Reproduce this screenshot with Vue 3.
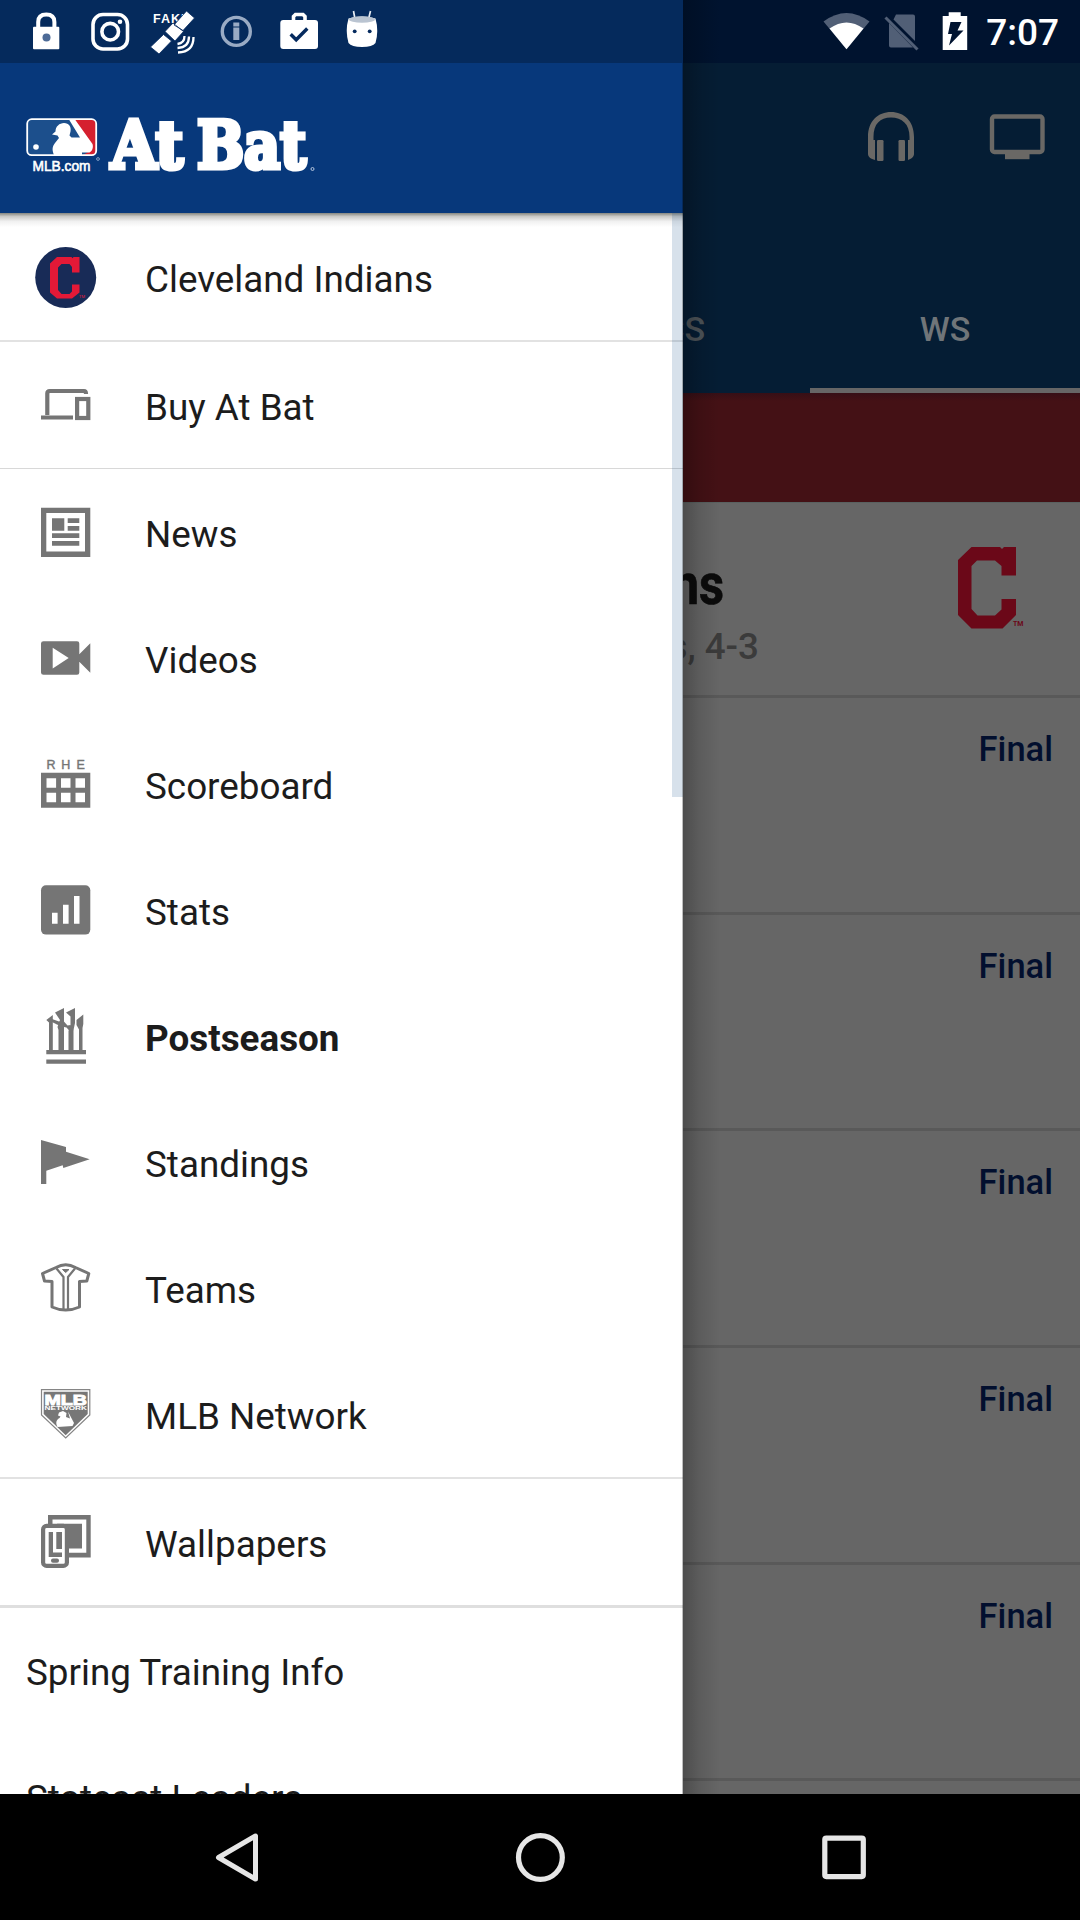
<script setup>
const menu = [
  { label: 'Cleveland Indians', icon: 'team', rule: 'thin' },
  { label: 'Buy At Bat', icon: 'devices', rule: 'hair' },
  { label: 'News', icon: 'news' },
  { label: 'Videos', icon: 'videos' },
  { label: 'Scoreboard', icon: 'scoreboard' },
  { label: 'Stats', icon: 'stats' },
  { label: 'Postseason', icon: 'postseason', active: true },
  { label: 'Standings', icon: 'standings' },
  { label: 'Teams', icon: 'teams' },
  { label: 'MLB Network', icon: 'network', rule: 'thin' },
  { label: 'Wallpapers', icon: 'wallpapers', rule: 'thick' },
  { label: 'Spring Training Info' },
  { label: 'Statcast Leaders' },
]
const games = ['Final', 'Final', 'Final', 'Final', 'Final']
</script>

<template>
  <div class="screen">
    <main class="page">
      <header class="appbar">
        <div class="actions">
          <svg width="48" height="52" viewBox="0 0 48 52" fill="#6a6865">
            <path d="M1 26C1 10 11 1 24 1s23 9 23 25v17c0 3-3 5-6 6V29h1.500v-3C42.500 13 35 6.500 24 6.500S6.500 13 6.500 26v3H8v20c-4-1-7-3-7-6z" />
            <rect x="10" y="29" width="6.500" height="21" rx="1.200" />
            <rect x="31.500" y="29" width="6.500" height="21" rx="1.200" />
          </svg>
          <svg width="56" height="46" viewBox="0 0 56 46">
            <rect x="3" y="2.500" width="50.500" height="35.500" rx="2.500" fill="none" stroke="#6a6865" stroke-width="4.400" />
            <rect x="16" y="38" width="24.500" height="7.200" fill="#6a6865" />
          </svg>
        </div>
        <div class="tabs">
          <div class="tab"></div>
          <div class="tab"></div>
          <div class="tab dim">LCS</div>
          <div class="tab selected">WS</div>
        </div>
      </header>
      <div class="banner"></div>
      <section class="series">
        <div class="series-text">
          <div class="series-title">Indians</div>
          <div class="series-sub">Series, 4-3</div>
        </div>
        <svg class="series-logo" width="72" height="88" viewBox="0 0 72 88">
          <path d="M15.500 1H44l2 2 2-2h12v28.500H45.500V20L39 14.500H21L15.500 20v43l6 6.500H39l6.500-6V53H60v16L46.500 82.500H15.500L2 69V14z" fill="#6b0818" />
          <text x="57" y="80" font-size="7" font-weight="700" fill="#6b0818">TM</text>
        </svg>
      </section>
      <section v-for="(g, i) in games" :key="i" class="game">{{ g }}</section>
    </main>

    <aside class="drawer">
      <div class="brand">
        <svg width="300" height="70" viewBox="0 0 300 70">
          <rect x="1.200" y="6.200" width="69" height="36" rx="4.500" fill="#1c4f8c" />
          <path d="M46 7h20q4 0 4 4v27q0 4-4 4h-9l9-5-1-6z" fill="#d5202f" />
          <path d="M43 6.500h6L66.500 31c1 3 0 7-3 8.500H56v2.500H28c-2-5-2-8 1-12l4-5-1.500-2.500-5.500-1 3.500-3c0-5 4-8.500 8.500-8.500 5 0 7.500 4 6.500 8.500l-1 4 2 2h8.500z" fill="#fff" />
          <circle cx="10" cy="34" r="2.800" fill="#fff" />
          <rect x="1.200" y="6.200" width="69" height="36" rx="4.500" fill="none" stroke="#fff" stroke-width="1.800" />
          <text class="dotcom" x="6.500" y="58.300" textLength="58" lengthAdjust="spacingAndGlyphs">MLB.com</text>
          <circle cx="72" cy="46" r="1.400" fill="none" stroke="#9fb5d4" stroke-width=".8" />
          <text class="atbat" x="85" y="55.300" textLength="72" lengthAdjust="spacingAndGlyphs">At</text>
          <text class="atbat" x="171" y="55.300" textLength="109" lengthAdjust="spacingAndGlyphs">Bat</text>
          <circle cx="286.500" cy="56" r="1.500" fill="none" stroke="#b6c6de" stroke-width="1" />
        </svg>
      </div>
      <nav class="menu">
        <div v-for="m in menu" :key="m.label" class="item" :class="[m.rule, { active: m.active, plain: !m.icon }]">
          <svg v-if="m.icon" class="icon" viewBox="0 0 72 72">
            <template v-if="m.icon === 'team'">
              <circle cx="35.700" cy="36.500" r="30.500" fill="#182b57" />
              <path d="M27 16h14.500l1 1.200 1-1.200h6v15.500H42V26L39.500 23h-8L28 26.500V49l3.500 4h8l2.500-2.500v-7h7.500v8l-7.500 6H27l-7-6v-29z" fill="#e31937" />
              <text x="49" y="57" font-size="4" fill="#e31937">TM</text>
            </template>
            <g v-else-if="m.icon === 'devices'" fill="none" stroke="#757575" stroke-width="4.200">
              <path d="M17.300 46V24.500q0-2.500 2.500-2.500H54q2 0 2 3M11 48.500h32" />
              <rect x="47.100" y="30" width="11.200" height="19" />
            </g>
            <g v-else-if="m.icon === 'news'" fill="#757575">
              <path fill-rule="evenodd" d="M11 11.700h49.300v49.200H11zM16.300 17v38.600H55V17z" />
              <path d="M22 22.300h12.300v12.400H22zM37.700 22.300h11.600V27H37.700zM37.700 30h11.600v4.700H37.700zM22 37.300h27.300V42H22zM22 45h27.300v4.800H22z" />
            </g>
            <g v-else-if="m.icon === 'videos'" fill="#757575">
              <path fill-rule="evenodd" d="M13.500 19.300H47q2.300 0 2.300 2.300v10.700l11-11v29.400l-11-11v10.700q0 2.300-2.300 2.300H13.500q-2.500 0-2.500-2.300V21.600q0-2.300 2.500-2.300zM22.700 25.800v20.600l16-10.300z" />
            </g>
            <g v-else-if="m.icon === 'scoreboard'" fill="#757575">
              <text class="rhe" x="16.600" y="21.300">R</text>
              <text class="rhe" x="31.300" y="21.300">H</text>
              <text class="rhe" x="46.600" y="21.300">E</text>
              <path fill-rule="evenodd" d="M11 24.700h49.300v35H11zM16.500 30.200v9.500h9.600v-9.500zM31 30.200v9.500h9.500v-9.500zM45.500 30.200v9.500H55v-9.500zM16.500 44.800v9.500h9.600v-9.500zM31 44.800v9.500h9.500v-9.500zM45.500 44.800v9.500H55v-9.500z" />
            </g>
            <g v-else-if="m.icon === 'stats'">
              <rect x="11" y="11.300" width="49.300" height="49.300" rx="5" fill="#757575" />
              <path d="M22 38.700h5.600v11H22zM33 30.700h5.600v19H33zM44 22h5.500v27.700H44z" fill="#fff" />
            </g>
            <g v-else-if="m.icon === 'postseason'" fill="#757575">
              <path d="M16.300 50h39.700v4.200H16.300zM16.300 59.600h39.700v4.200H16.300z" />
              <path d="M19 51V22.500l-2.700-2.500 6.500-5v36z" />
              <path d="M22 19l7 2.500 4.500-.5 4 4.500 3-.5 3 5-2.500 2.500-4.500-5-5-1-4.500-2-5-2.500z" />
              <path d="M28.500 51V30l-1-3 2.500-7-5-7.500L34 8v43z" />
              <path d="M38.500 51V31l2-5.500v-9L36 12.500 45 8v15l-1.500 7v21z" />
              <path d="M49 51V29.500L46.500 25V20l6.800-5.500V24L52.500 28v23z" />
            </g>
            <path v-else-if="m.icon === 'standings'" fill="#757575" d="M11 14l25 7v4.700l23.700 7.600L33.300 42l-.6-2.700-16.400 5.400V58H11z" />
            <g v-else-if="m.icon === 'teams'" fill="none" stroke="#757575" stroke-width="3" stroke-linejoin="round">
              <path d="M26 15.500Q35.700 10 45.500 15.500l13.300 6-2 7.500-7.300.5V55q-6.500 3-13.800 3T22 55V29.500l-7.500-.5-2-7.500z" />
              <path d="M26.500 16.500l7 8.500v32.500M45 16.500L38 25v32.500" stroke-width="2.200" />
              <path d="M32.500 17.500h6.500l-3.300 3z" fill="#757575" stroke-width="1" />
            </g>
            <g v-else-if="m.icon === 'network'">
              <path d="M11.500 11.700h48.300V37L35.700 60 11.500 37z" fill="#fff" stroke="#858585" stroke-width="1.200" />
              <path d="M13.700 13.800h44V36L35.700 57.300 13.700 36z" fill="#777" />
              <text class="net-big" x="14.500" y="27" textLength="42.500" lengthAdjust="spacingAndGlyphs">MLB</text>
              <text class="net-small" x="14.500" y="32" textLength="42.500" lengthAdjust="spacingAndGlyphs">NETWORK</text>
              <path d="M27.500 49c-2-4-1.500-7 2-9l1-1.500-2.500-1 1-3 4-1.500 3.500 2-.5 4 4 1.500-2-7 6 11.500-1.500 3z" fill="#fff" />
            </g>
            <g v-else fill="#757575">
              <path fill-rule="evenodd" d="M18 9h42.700v42.400H38v-4.700h18.300V13.400H22.500V19H18z" />
              <path d="M27 17.700h25v24.700H38z" />
              <rect x="13.100" y="19.900" width="23.800" height="40" rx="3.500" fill="#fff" stroke="#757575" stroke-width="4.200" />
              <path d="M18.700 26H23v20.500h9V51H18.700zM26.300 26h5.700v17h-5.700z" />
              <rect x="21" y="52.500" width="8" height="4.200" rx="2" />
            </g>
          </svg>
          <span>{{ m.label }}</span>
        </div>
        <div class="scroll-thumb"></div>
      </nav>
    </aside>

    <div class="status">
      <div class="status-left">
        <svg class="s" viewBox="0 0 63 63">
          <path d="M23.200 28v-6q0-7.500 8.100-7.500t8.100 7.500v6" fill="none" stroke="#fff" stroke-width="4" />
          <rect x="18" y="26.700" width="26.300" height="22.500" rx="1" fill="#fff" />
          <circle cx="31.500" cy="37.500" r="4" fill="#4d6b97" />
        </svg>
        <svg class="s" viewBox="0 0 63 63" fill="none" stroke="#fff">
          <rect x="15" y="14.500" width="34.500" height="34.500" rx="10" stroke-width="3.600" />
          <circle cx="32.200" cy="31.700" r="8.300" stroke-width="3.600" />
          <circle cx="42" cy="21.700" r="2.300" fill="#fff" stroke="none" />
        </svg>
        <svg class="s" viewBox="0 0 63 63">
          <text class="fake" x="12" y="22.600">FAKE</text>
          <path d="M33 25L45.500 11l8 7L42 30.500zM24 31.500l8-8.500 10.500 8.500-8.500 9.500zM9.500 47L22.500 34.500l8 6.500-12.500 13z" fill="#fff" stroke="#052a5e" stroke-width=".8" />
          <g fill="none" stroke="#fff" stroke-width="2.300">
            <path d="M43.500 36q0 7-7 8M48 36.500q0 11-11.500 11.500M52.500 37q0 15-15.500 15.500" />
          </g>
        </svg>
        <svg class="s" viewBox="0 0 63 63" fill="#9aabc4">
          <circle cx="32.300" cy="31.400" r="14" fill="none" stroke="#9aabc4" stroke-width="3.400" />
          <rect x="29.300" y="22.500" width="6" height="4" />
          <rect x="29.300" y="27.500" width="6" height="12.500" />
        </svg>
        <svg class="s" viewBox="0 0 63 63">
          <rect x="13.300" y="20" width="37.700" height="29" rx="3" fill="#fff" />
          <path d="M26.500 21v-4.500l2-2h7.500l2 2V21" fill="none" stroke="#fff" stroke-width="3.600" />
          <path d="M23.700 34.300l5.500 5.500L40.300 28.500" fill="none" stroke="#052a5e" stroke-width="3.400" />
        </svg>
        <svg class="s" viewBox="0 0 63 63">
          <path d="M23.500 11l1.300 7M40.500 11l-1.700 7" stroke="#e8edf4" stroke-width="1.700" />
          <path d="M18.500 18.500q13.500-4 27 0 3.500 12.500 0 24.500-3 4-13.500 4t-13.500-4q-3.500-12.500 0-24.500z" fill="#fff" />
          <ellipse cx="32" cy="19.500" rx="13" ry="3.300" fill="#bac4d1" />
          <circle cx="24.700" cy="31.300" r="1.900" fill="#052a5e" />
          <circle cx="39.700" cy="31.300" r="1.900" fill="#052a5e" />
        </svg>
      </div>
      <div class="status-right">
        <svg width="48" height="63" viewBox="0 0 48 63">
          <path d="M1.500 21.500Q24.500 4.500 47.500 21.500L24.500 49.300z" fill="#515f76" />
          <path d="M7.500 28.500Q24.500 16.500 41.500 28.500L24.500 49.300z" fill="#fff" />
        </svg>
        <svg width="36" height="63" viewBox="0 0 36 63">
          <path d="M12 14.500h17q2 0 2 2V41L9.500 19.500zM5 23l24 24.500H7q-2 0-2-2z" fill="#515f76" />
          <path d="M1.500 17.500l32 32" stroke="#515f76" stroke-width="3" />
        </svg>
        <svg width="26" height="63" viewBox="0 0 26 63">
          <path d="M.7 16h6v-3.700h12V16h6.500v34H.7z" fill="#fff" />
          <path d="M8.500 22h11l-4 8.500h6L7 45.500l3-11.500H6z" fill="#001330" />
        </svg>
        <span class="clock">7:07</span>
      </div>
    </div>

    <footer class="navbar">
      <svg width="50" height="56" viewBox="0 0 50 56"><path d="M44.500 7v43L7.500 28.500z" fill="none" stroke="#e6e6e6" stroke-width="5" stroke-linejoin="round" /></svg>
      <svg width="50" height="56" viewBox="0 0 50 56"><circle cx="25.400" cy="28.500" r="21.900" fill="none" stroke="#e6e6e6" stroke-width="5.200" /></svg>
      <svg width="50" height="56" viewBox="0 0 50 56"><rect x="5.800" y="9.100" width="38.500" height="38.500" rx="1.500" fill="none" stroke="#e6e6e6" stroke-width="5.200" /></svg>
    </footer>
  </div>
</template>

<style>
body { margin: 0; background: #000; }
</style>

<style scoped>
.screen {
  position: relative;
  width: 1080px;
  height: 1920px;
  overflow: hidden;
  display: flex;
  flex-direction: column;
  background: #666;
  font-family: Roboto, "Noto Sans", sans-serif;
}
svg { display: block; flex: none; overflow: visible; }
.page { height: 1794px; overflow: hidden; flex: none; display: flex; flex-direction: column; }
.appbar {
  flex: none;
  height: 393px;
  box-sizing: border-box;
  padding-top: 63px;
  background: #051d34;
  display: flex;
  flex-direction: column;
}
.actions {
  height: 147px;
  box-sizing: border-box;
  padding: 0 35px 0 0;
  display: flex;
  justify-content: flex-end;
  align-items: center;
  gap: 74px;
}
.tabs { flex: 1; display: flex; }
.tab {
  width: 270px;
  box-sizing: border-box;
  padding-top: 99px;
  text-align: center;
  font-size: 34px;
  line-height: 40px;
  font-weight: 500;
  color: #707579;
}
.tab.dim { color: #4d5459; }
.tab.selected { border-bottom: 5px solid #666; }
.banner {
  flex: none;
  height: 110px;
  background: linear-gradient(#360f16, #441115 8px);
  border-bottom: 1px solid #596160;
  box-sizing: border-box;
}
.series {
  flex: none;
  height: 195px;
  box-sizing: border-box;
  border-bottom: 3px solid #595959;
  display: flex;
  justify-content: space-between;
  padding: 43px 52px 0 0;
}
.series-text { width: 759px; }
.series-title {
  width: 724px;
  text-align: right;
  font-size: 58px;
  line-height: 68px;
  margin-top: 4px;
  font-weight: 700;
  color: #0b0b0b;
  -webkit-text-stroke: .7px #0b0b0b;
  transform: scaleX(.84);
  transform-origin: right;
}
.series-sub {
  text-align: right;
  margin-top: 6px;
  font-size: 36.750px;
  line-height: 46px;
  font-weight: 500;
  color: #3b3b3b;
}
.game {
  flex: none;
  height: 216.670px;
  box-sizing: border-box;
  border-bottom: 3px solid #595959;
  padding: 31px 27px 0 0;
  text-align: right;
  font-size: 34.500px;
  line-height: 40px;
  font-weight: 500;
  color: #020f2e;
}
.drawer {
  position: absolute;
  left: 0;
  top: 0;
  width: 683px;
  height: 1794px;
  background: #fff;
  display: flex;
  flex-direction: column;
}
.drawer::after {
  content: "";
  position: absolute;
  left: 682px;
  top: 0;
  width: 38px;
  height: 100%;
  background: linear-gradient(90deg, rgba(0, 0, 0, .26), rgba(0, 0, 0, .1) 45%, rgba(0, 0, 0, 0));
}
.brand {
  flex: none;
  height: 213px;
  box-sizing: border-box;
  padding: 113px 0 0 26px;
  background: #07387b;
}
.dotcom { font: 400 14px "Liberation Sans", Arial, sans-serif; fill: #fff; stroke: #fff; stroke-width: .6px; }
.atbat { font: 700 65px "DejaVu Serif", serif; fill: #fff; stroke: #fff; stroke-width: 5px; }
.menu { position: relative; flex: 1; overflow: hidden; }
.menu::before {
  content: "";
  position: absolute;
  left: 0;
  top: 0;
  width: 100%;
  height: 14px;
  background: linear-gradient(#85867f, #c9c9c6 25%, #f1f1f1 60%, rgba(255, 255, 255, 0));
}
.item {
  height: 126px;
  display: flex;
  align-items: center;
  padding-left: 30px;
  font-size: 36.820px;
  line-height: 44px;
  color: #1c1c1c;
}
.item:first-child { height: 127px; }
.item span { margin-left: 43px; padding-top: 6px; white-space: nowrap; }
.item.plain { padding-left: 26px; }
.item.plain span { margin-left: 0; padding-top: 4px; }
.item.active { font-weight: 700; }
.icon { width: 72px; height: 72px; }
.thin { border-bottom: 2px solid #e2e2e2; }
.hair { border-bottom: 1px solid #d8d8d8; }
.thick { border-bottom: 3px solid #dfdfdf; }
.thick span { padding-top: 5px; }
.rhe { font: 400 12.500px "Liberation Sans", Arial, sans-serif; stroke: #757575; stroke-width: .4px; }
.net-big { font: 700 15.500px "Liberation Sans", Arial, sans-serif; fill: #fff; stroke: #fff; stroke-width: 1px; }
.net-small { font: 700 5px "Liberation Sans", Arial, sans-serif; fill: #fff; }
.scroll-thumb {
  position: absolute;
  right: 0;
  top: 0;
  width: 11px;
  height: 584px;
  background: rgba(8, 66, 130, .16);
}
.status {
  position: absolute;
  left: 0;
  top: 0;
  width: 1080px;
  height: 63px;
  box-sizing: border-box;
  padding: 0 21px 0 15px;
  display: flex;
  justify-content: space-between;
  background: linear-gradient(90deg, #052a5c 683px, #000f25 683px, #00132f 720px);
}
.status-left, .status-right { display: flex; align-items: center; }
.s { width: 63px; height: 63px; }
.status-right svg + svg { margin-left: 14.500px; }
.status-right svg:nth-child(3) { margin-left: 22px; }
.clock {
  margin-left: 18px;
  padding-top: 3px;
  font-size: 37px;
  line-height: 44px;
  font-weight: 500;
  color: #fff;
}
.fake { font: 700 12.500px "Liberation Sans", Arial, sans-serif; letter-spacing: 1px; fill: #fff; }
.navbar {
  flex: none;
  height: 126px;
  background: #000;
  display: flex;
  align-items: center;
  justify-content: space-between;
  padding: 0 211px 0 211px;
}
</style>
